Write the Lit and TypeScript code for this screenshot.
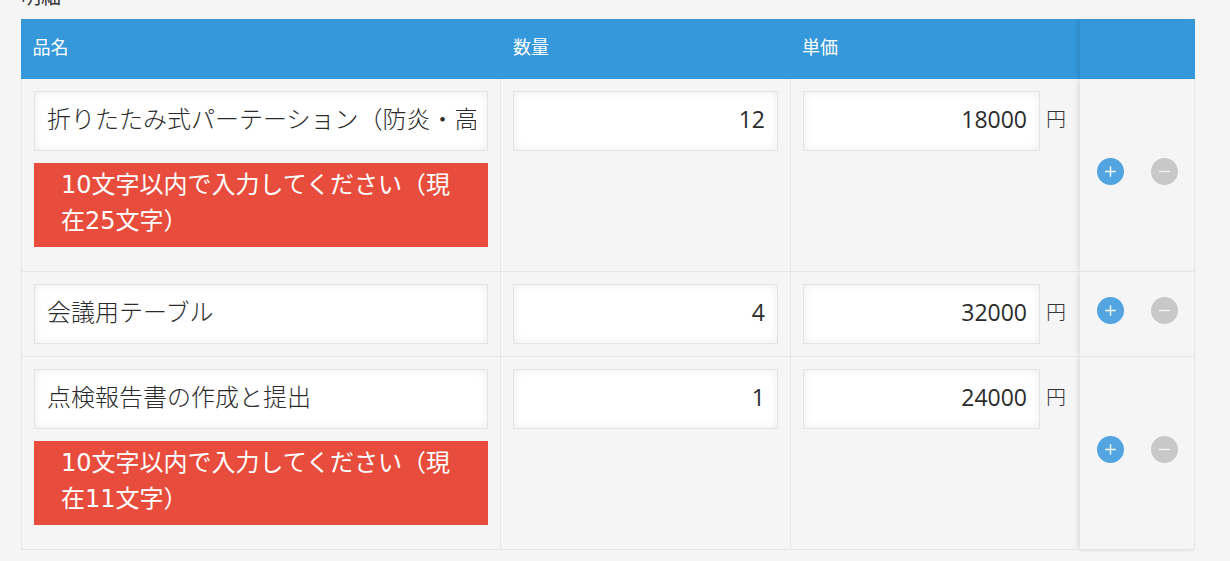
import { LitElement, html, css } from "lit";
import { customElement } from "lit/decorators.js";

interface Row { name: string; qty: string; price: string; error?: string; }

const ROWS: Row[] = [
  { name: "折りたたみ式パーテーション（防炎・高さ180cm）", qty: "12", price: "18000", error: "10文字以内で入力してください（現在25文字）" },
  { name: "会議用テーブル", qty: "4", price: "32000" },
  { name: "点検報告書の作成と提出", qty: "1", price: "24000", error: "10文字以内で入力してください（現在11文字）" },
];

@customElement("app-root")
export class AppRoot extends LitElement {
  static styles = css`
    :host {
      display: block;
      height: 561px;
      overflow: hidden;
      background: #f5f5f5;
      color: #333;
      font-family: "Noto Sans CJK JP", "Noto Sans", sans-serif;
    }
    .wrap { padding: 0 35px 0 21px; }
    .label {
      margin-top: -18px;
      height: 37px;
      font-size: 20px;
      line-height: 28px;
    }
    .grid {
      display: grid;
      grid-template-columns: 479px 290px 289px 116px;
    }
    .head {
      height: 60px;
      background: #3498db;
      color: #fff;
      font-size: 18px;
      line-height: 55px;
      padding-left: 12px;
    }
    .head:nth-child(1) { padding-left: 11.5px; }
    .head:nth-child(2) { padding-left: 13px; }
    .cell {
      border-left: 1px solid #e3e7e8;
      border-top: 1px solid #e3e7e8;
      padding: 12px;
      box-sizing: border-box;
      font-weight: 300;
    }
    .cell.first { border-top: none; }
    .cell.last { border-bottom: 1px solid #e3e7e8; }
    .actions-col {
      position: relative;
      box-shadow: -3px 0 5px -2px rgba(0, 0, 0, 0.12);
    }
    .actions-col.last {
      box-shadow: -3px 0 5px -2px rgba(0, 0, 0, 0.12), 0 2px 3px -1px rgba(0, 0, 0, 0.05);
    }
    .actions {
      border-right: 1px solid #e3e7e8;
      padding: 0 0 8px 17px;
      display: flex;
      align-items: center;
      gap: 27px;
    }
    .head.actions-col {
      background: #3498db;
      padding: 0;
      border-left: 1px solid rgba(0, 0, 0, 0.06);
      box-sizing: border-box;
    }
    .field {
      display: block;
      width: 100%;
      height: 60px;
      box-sizing: border-box;
      border: 1px solid #e4e4e4;
      background: #fff;
      box-shadow: inset 0 0 8px rgba(0, 0, 0, 0.08);
      padding: 0 11px 8px 12px;
      margin: 0;
      outline: none;
      font: inherit;
      font-size: 24px;
      color: #2b2b2b;
    }
    .num {
      text-align: right;
      font-family: "Open Sans", sans-serif;
      font-weight: 400;
      font-size: 23px;
      padding: 0 12px 4px 12px;
    }
    .price { display: flex; align-items: flex-start; gap: 6px; }
    .price .field { width: 237px; flex: none; }
    .yen { font-size: 20px; line-height: 56px; }
    .error {
      margin: 12px 0;
      height: 84px;
      box-sizing: border-box;
      background: #e74c3c;
      color: #fff;
      font-family: "DejaVu Sans", "Noto Sans CJK JP", sans-serif;
      font-weight: 400;
      font-size: 24px;
      line-height: 36px;
      padding: 4px 26px 0 27px;
    }
    .btn { width: 27px; height: 27px; flex: none; display: block; }
  `;

  private plus() {
    return html`<svg class="btn" viewBox="0 0 27 27" aria-label="add">
      <circle cx="13.5" cy="13.5" r="13.5" fill="#52a5e0"></circle>
      <path d="M13.5 8.2v10.6M8.2 13.5h10.6" stroke="#fff" stroke-width="1.4" fill="none"></path>
    </svg>`;
  }

  private minus() {
    return html`<svg class="btn" viewBox="0 0 27 27" aria-label="remove">
      <circle cx="13.5" cy="13.5" r="13.5" fill="#c8c8c8"></circle>
      <path d="M8 13.5h11" stroke="#f2f2f2" stroke-width="1.4" fill="none"></path>
    </svg>`;
  }

  render() {
    return html`<div class="wrap">
      <div class="label">明細</div>
      <div class="grid">
        <div class="head">品名</div>
        <div class="head">数量</div>
        <div class="head">単価</div>
        <div class="head actions-col"></div>
        ${ROWS.map((r, i) => {
          const pos = (i === 0 ? " first" : "") + (i === ROWS.length - 1 ? " last" : "");
          return html`
            <div class="cell${pos}">
              <input class="field" .value=${r.name} />
              ${r.error ? html`<div class="error">${r.error}</div>` : ""}
            </div>
            <div class="cell${pos}"><input class="field num" .value=${r.qty} /></div>
            <div class="cell${pos}">
              <div class="price">
                <input class="field num" .value=${r.price} />
                <span class="yen">円</span>
              </div>
            </div>
            <div class="cell actions actions-col${pos}">${this.plus()}${this.minus()}</div>
          `;
        })}
      </div>
    </div>`;
  }
}
